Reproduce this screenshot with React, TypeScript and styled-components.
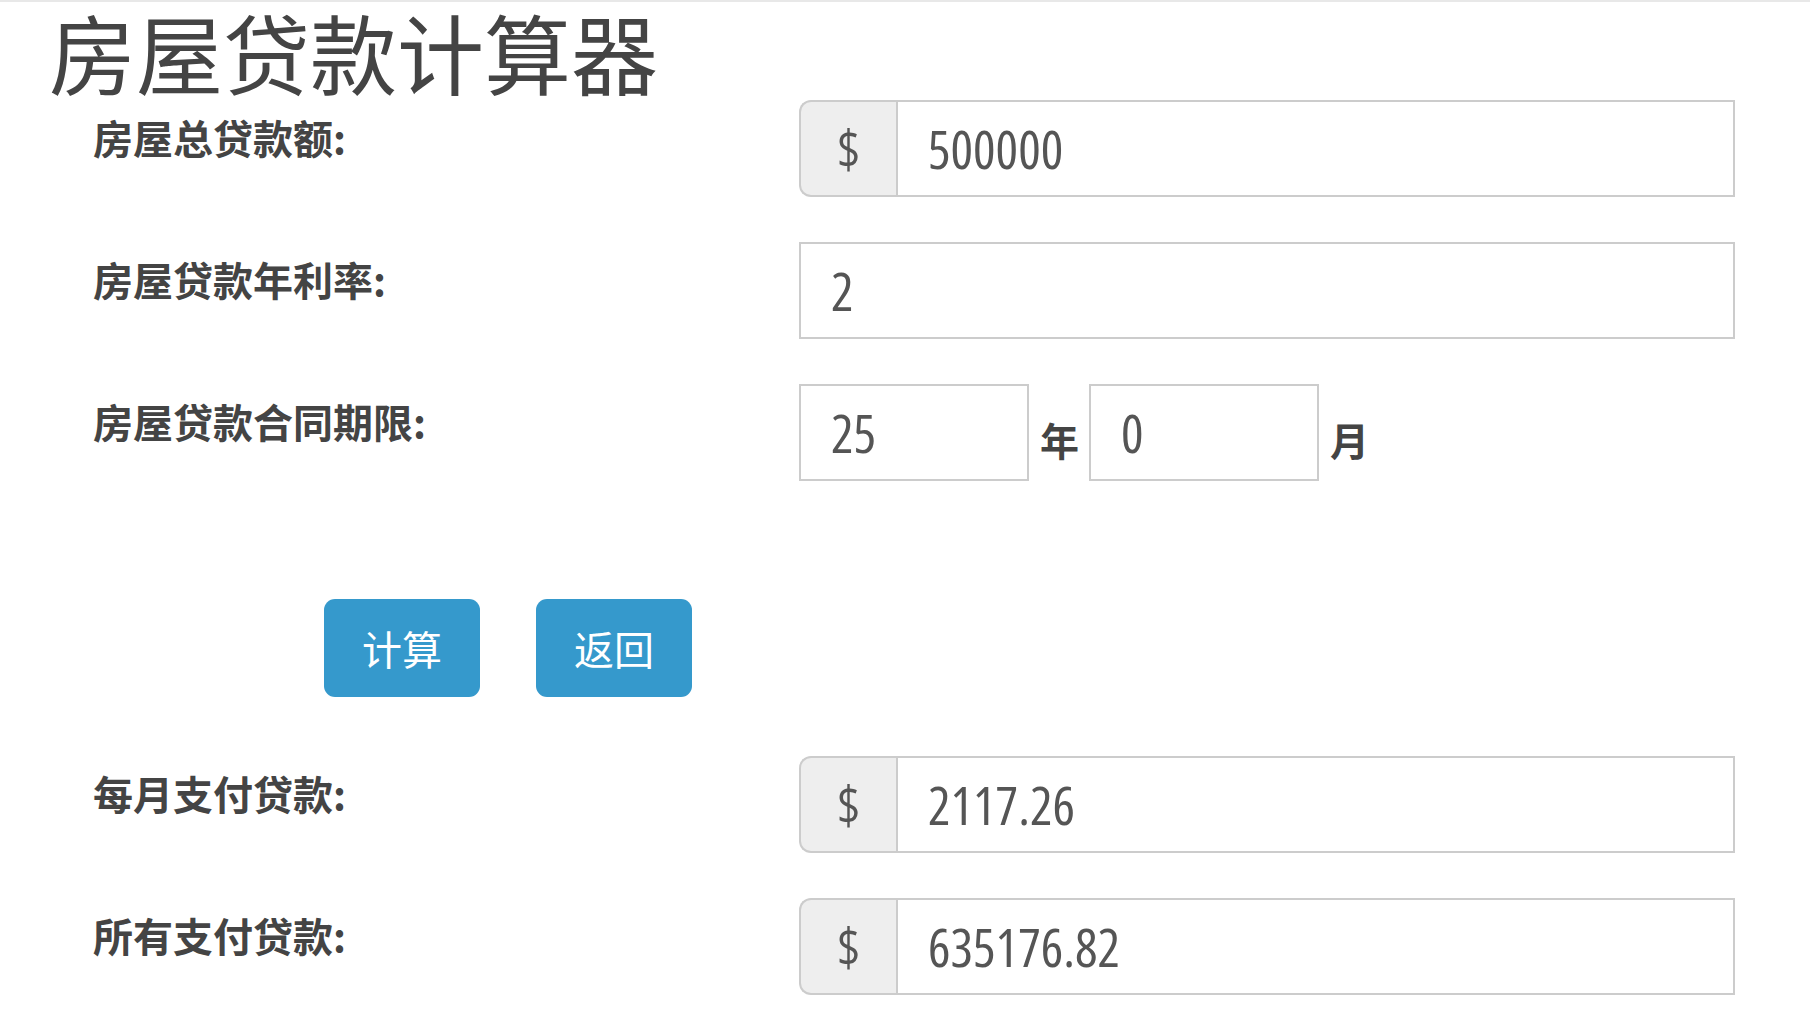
import React from "react";
import styled, { createGlobalStyle } from "styled-components";

const GlobalStyle = createGlobalStyle`
  body {
    margin: 0;
    background: #fff;
    font-family: "Noto Sans CJK SC", "Noto Sans", sans-serif;
    color: #444;
  }
`;

const Page = styled.div`
  border-top: 2px solid #e8e8e8;
  width: 1810px;
`;

const Title = styled.h1`
  margin: 0;
  padding-left: 49px;
  font-size: 87px;
  line-height: 98px;
  font-weight: 400;
  color: #444;
`;

const Row = styled.div<{ $gap?: number }>`
  display: grid;
  grid-template-columns: 799px 936px;
  margin-bottom: ${(p) => p.$gap ?? 45}px;
`;

const Label = styled.label`
  padding: 17px 0 0 93px;
  font-size: 40px;
  line-height: 1;
  font-weight: 700;
  color: #444;
`;

const InputGroup = styled.div`
  display: flex;
  height: 97px;
`;

const Addon = styled.span`
  box-sizing: border-box;
  width: 97px;
  display: flex;
  align-items: center;
  justify-content: center;
  background: #eee;
  border: 2px solid #ccc;
  border-right: 0;
  border-radius: 12px 0 0 12px;
  font-family: "Open Sans", sans-serif;
  font-stretch: 75%;
  font-size: 52px;
  color: #555;
`;

const Field = styled.input<{ $width?: number }>`
  box-sizing: border-box;
  flex: ${(p) => (p.$width ? "none" : "1")};
  width: ${(p) => (p.$width ? `${p.$width}px` : "auto")};
  min-width: 0;
  height: 97px;
  margin: 0;
  padding: 0 0 0 30px;
  border: 2px solid #ccc;
  border-radius: 0;
  background: #fff;
  font-family: "Open Sans", sans-serif;
  font-stretch: 75%;
  font-size: 53px;
  color: #555;
  outline: none;
`;

const TermGroup = styled.div`
  display: flex;
  align-items: flex-start;
`;

const Unit = styled.span`
  padding: 36px 10px 0 11px;
  font-size: 39px;
  line-height: 1;
  font-weight: 700;
  color: #444;
`;

const ButtonRow = styled.div`
  display: flex;
  gap: 56px;
  padding-left: 324px;
  margin: 118px 0 59px;
`;

const Button = styled.button`
  width: 156px;
  height: 98px;
  border: 0;
  border-radius: 11px;
  background: #3599cc;
  color: #fff;
  font-family: "Noto Sans CJK SC", sans-serif;
  font-size: 40px;
  cursor: pointer;
`;

function MoneyField({ value }: { value: string }) {
  return (
    <InputGroup>
      <Addon>$</Addon>
      <Field defaultValue={value} />
    </InputGroup>
  );
}

export default function App() {
  return (
    <Page>
      <GlobalStyle />
      <Title>房屋贷款计算器</Title>
      <form onSubmit={(e) => e.preventDefault()}>
        <Row>
          <Label>房屋总贷款额:</Label>
          <MoneyField value="500000" />
        </Row>
        <Row>
          <Label>房屋贷款年利率:</Label>
          <InputGroup>
            <Field defaultValue="2" />
          </InputGroup>
        </Row>
        <Row $gap={0}>
          <Label>房屋贷款合同期限:</Label>
          <TermGroup>
            <Field $width={230} defaultValue="25" />
            <Unit>年</Unit>
            <Field $width={230} defaultValue="0" />
            <Unit>月</Unit>
          </TermGroup>
        </Row>
        <ButtonRow>
          <Button type="submit">计算</Button>
          <Button type="button">返回</Button>
        </ButtonRow>
        <Row>
          <Label>每月支付贷款:</Label>
          <MoneyField value="2117.26" />
        </Row>
        <Row>
          <Label>所有支付贷款:</Label>
          <MoneyField value="635176.82" />
        </Row>
      </form>
    </Page>
  );
}
